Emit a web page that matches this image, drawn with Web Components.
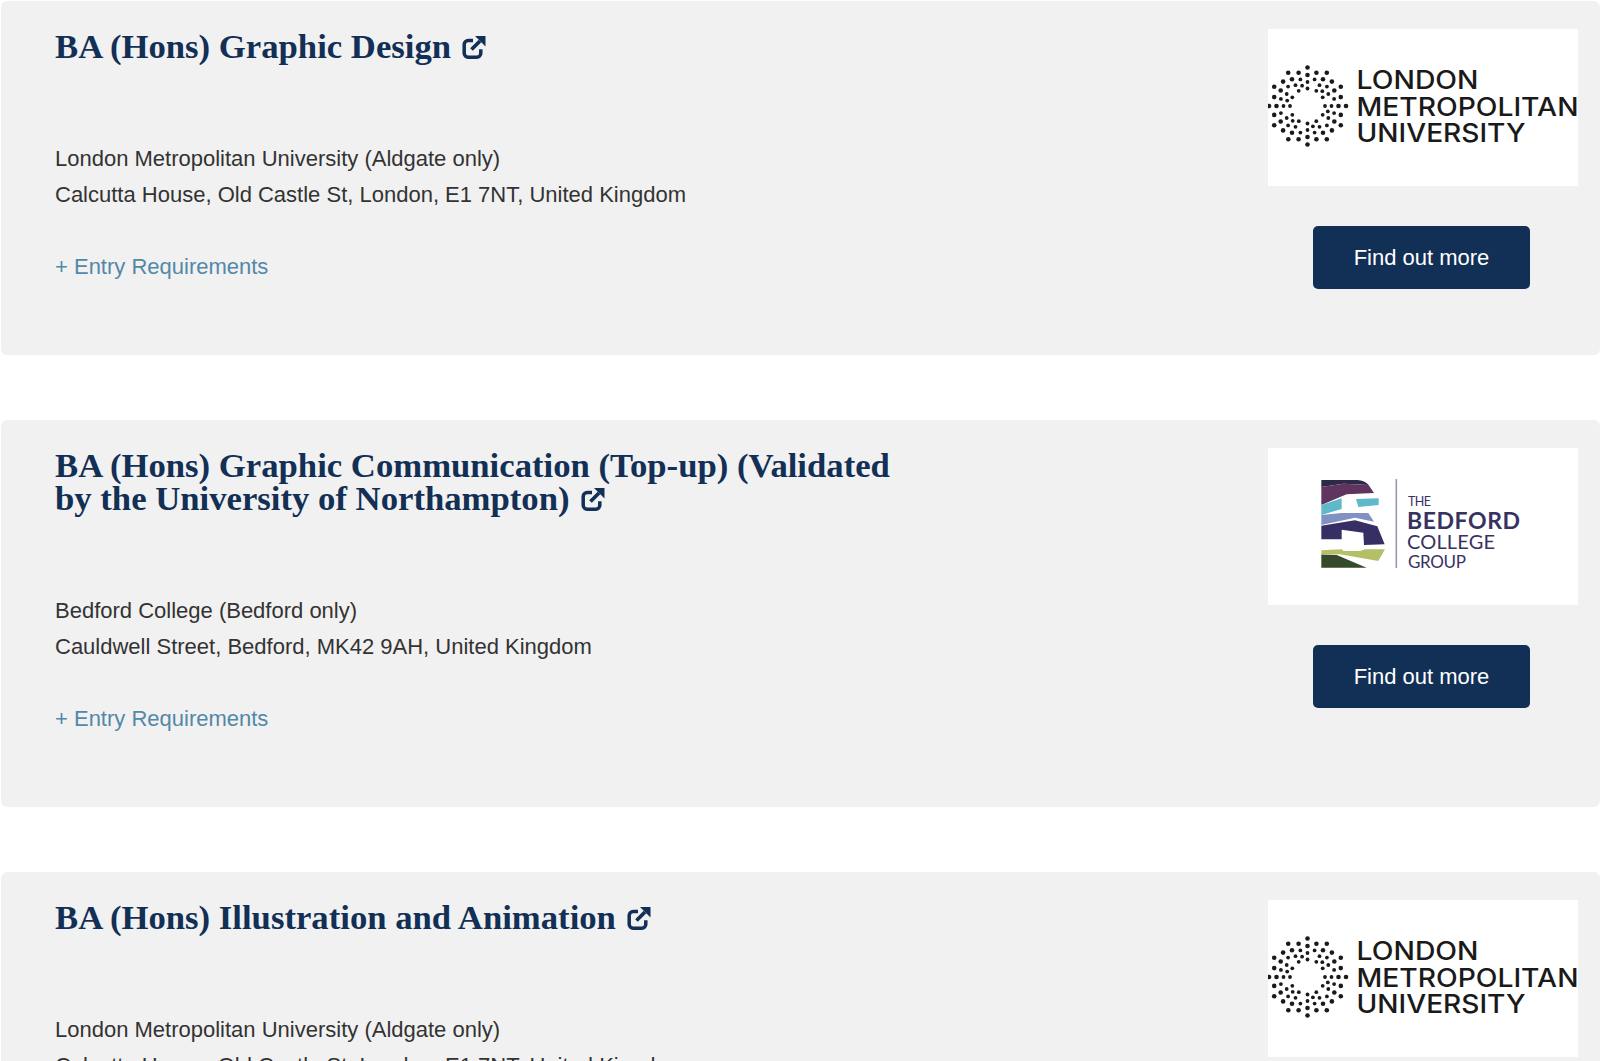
<!DOCTYPE html>
<html lang="en">
<head>
<meta charset="utf-8">
<title>Courses</title>
<style>
  html, body { margin: 0; height: 1061px; overflow: hidden; background: #fff; }
  body { font-family: "Liberation Sans", Arial, sans-serif; }
  course-list { padding: 1px 0 0 1px; }
</style>
</head>
<body>
<course-list>
  <course-card>
    <span slot="title">BA (Hons) Graphic Design</span>
    <span slot="place">London Metropolitan University (Aldgate only)</span>
    <span slot="address">Calcutta House, Old Castle St, London, E1 7NT, United Kingdom</span>
    <lmu-logo slot="logo"></lmu-logo>
  </course-card>
  <course-card>
    <span slot="title">BA (Hons) Graphic Communication (Top-up) (Validated by the University of Northampton)</span>
    <span slot="place">Bedford College (Bedford only)</span>
    <span slot="address">Cauldwell Street, Bedford, MK42 9AH, United Kingdom</span>
    <bedford-logo slot="logo"></bedford-logo>
  </course-card>
  <course-card>
    <span slot="title">BA (Hons) Illustration and Animation</span>
    <span slot="place">London Metropolitan University (Aldgate only)</span>
    <span slot="address">Calcutta House, Old Castle St, London, E1 7NT, United Kingdom</span>
    <lmu-logo slot="logo"></lmu-logo>
  </course-card>
</course-list>

<script>
  class CourseList extends HTMLElement {
    constructor() {
      super();
      this.attachShadow({ mode: "open" }).innerHTML = `
        <style>
          :host { display: flex; flex-direction: column; gap: 65px; }
        </style>
        <slot></slot>`;
    }
  }

  class ExtIcon extends HTMLElement {
    constructor() {
      super();
      this.attachShadow({ mode: "open" }).innerHTML = `
        <style>
          :host { display: inline-block; width: 24px; height: 24px; vertical-align: -1px; margin-left: 11px; }
          svg { display: block; }
        </style>
        <svg width="24" height="24" viewBox="0 0 24 24" fill="none" stroke="currentColor">
          <path stroke-width="3.5" d="M11 5.6H6.2a4 4 0 0 0-4 4v8.6a4 4 0 0 0 4 4h8.6a4 4 0 0 0 4-4v-4"/>
          <path stroke-width="3.8" d="M9.5 14.5L18 6"/>
          <path fill="currentColor" stroke="none" d="M13 1h10.5v10.5z"/>
        </svg>`;
    }
  }

  class FindMore extends HTMLElement {
    constructor() {
      super();
      this.attachShadow({ mode: "open" }).innerHTML = `
        <style>
          :host { display: flex; align-items: center; justify-content: center; width: 217px; height: 63px;
            background: #122f56; color: #fff; border-radius: 5px; font-size: 22px; cursor: pointer; }
        </style>
        <slot></slot>`;
    }
  }

  class LmuLogo extends HTMLElement {
    constructor() {
      super();
      // sunburst: 24 spokes, every other one pushed out
      let dots = "";
      for (let i = 0; i < 24; i++) {
        const a = i * Math.PI / 12;
        const radii = i % 2 ? [34.5, 27.5] : [38.5, 31, 24, 17.5];
        if (i % 4 == 1) radii.push(21);
        radii.forEach(r => {
          const x = (39.5 + r * Math.cos(a)).toFixed(1);
          const y = (77 + r * Math.sin(a)).toFixed(1);
          const s = r > 30 ? 2.3 : 1.9;
          dots += `<circle cx="${x}" cy="${y}" r="${s}"/>`;
        });
      }
      this.attachShadow({ mode: "open" }).innerHTML = `
        <style>
          :host { display: block; width: 310px; height: 156.5px; background: #fff; overflow: hidden; }
          svg { display: block; }
          text { font-family: Inter, "Liberation Sans", sans-serif; font-weight: 500; font-size: 25.5px; fill: #1a1a1a; }
        </style>
        <svg width="310" height="157" viewBox="0 0 310 157">
          <g fill="#1a1a1a">${dots}</g>
          <text x="88.5" y="60" textLength="122" lengthAdjust="spacingAndGlyphs">LONDON</text>
          <text x="88.5" y="86.5" textLength="222" lengthAdjust="spacingAndGlyphs">METROPOLITAN</text>
          <text x="88.5" y="112.5" textLength="169" lengthAdjust="spacingAndGlyphs">UNIVERSITY</text>
        </svg>`;
    }
  }

  class BedfordLogo extends HTMLElement {
    constructor() {
      super();
      this.attachShadow({ mode: "open" }).innerHTML = `
        <style>
          :host { display: block; width: 310px; height: 156.5px; background: #fff; overflow: hidden; }
          svg { display: block; }
          text { font-family: Lato, "Open Sans", sans-serif; fill: #37325f; }
        </style>
        <svg width="310" height="157" viewBox="1268 447 310 157">
          <g transform="translate(1300 470) scale(.3333)">
            <path fill="#2c2a47" d="M64 27H172Q195 28 206 42L130 38L64 48z"/>
            <path fill="#5f3560" d="M64 48L130 38L206 42L222 66L140 70L64 102z"/>
            <path fill="#5fb9cb" d="M64 102L125 82V114L64 132zM168 84L236 82V102L175 108z"/>
            <path fill="#8291c4" d="M64 132L125 126H175L205 126L222 152L165 140L64 162z"/>
            <path fill="#352f63" d="M64 164L165 148L232 166L254 220L192 222L190 185L125 176V205H64z"/>
            <path fill="#b4bf68" d="M64 238L125 235L130 240H180L195 235H255L235 270L120 250L64 251z"/>
            <path fill="#35492c" d="M64 251L110 252L200 290H64z"/>
          </g>
          <rect x="1395.5" y="478" width="1.6" height="89" fill="#9a98b5"/>
          <text x="1408" y="505" font-size="12.5" textLength="23">THE</text>
          <text x="1407" y="528" font-size="23" font-weight="700" textLength="113">BEDFORD</text>
          <text x="1407" y="548" font-size="20" textLength="88">COLLEGE</text>
          <text x="1408" y="567" font-size="17" textLength="58">GROUP</text>
        </svg>`;
    }
  }

  class CourseCard extends HTMLElement {
    constructor() {
      super();
      this.attachShadow({ mode: "open" }).innerHTML = `
        <style>
          :host { display: grid; grid-template-columns: 1fr 310px; column-gap: 40px;
            background: #f1f1f1; border-radius: 6px; padding: 28px 22px 0 54px; color: #333; }
          .main { padding-bottom: 70px; }
          h2 { margin: 0 0 78px; max-width: 860px; padding-top: 1px; color: #122f56;
            font: 700 34.7px/33px "Liberation Serif", "Times New Roman", serif; }
          p { margin: 0; font-size: 22px; line-height: 36px; }
          p + p { margin-top: -0.5px; }
          .entry { margin-top: 36.5px; color: #5488a8; }
          .side { display: flex; flex-direction: column; gap: 40.7px; }
          find-more { margin-left: 45px; }
        </style>
        <div class="main">
          <h2><slot name="title"></slot><ext-icon></ext-icon></h2>
          <p><slot name="place"></slot></p>
          <p><slot name="address"></slot></p>
          <p class="entry">+ Entry Requirements</p>
        </div>
        <div class="side">
          <slot name="logo"></slot>
          <find-more>Find out more</find-more>
        </div>`;
    }
  }

  customElements.define("course-list", CourseList);
  customElements.define("ext-icon", ExtIcon);
  customElements.define("find-more", FindMore);
  customElements.define("lmu-logo", LmuLogo);
  customElements.define("bedford-logo", BedfordLogo);
  customElements.define("course-card", CourseCard);
</script>
</body>
</html>
